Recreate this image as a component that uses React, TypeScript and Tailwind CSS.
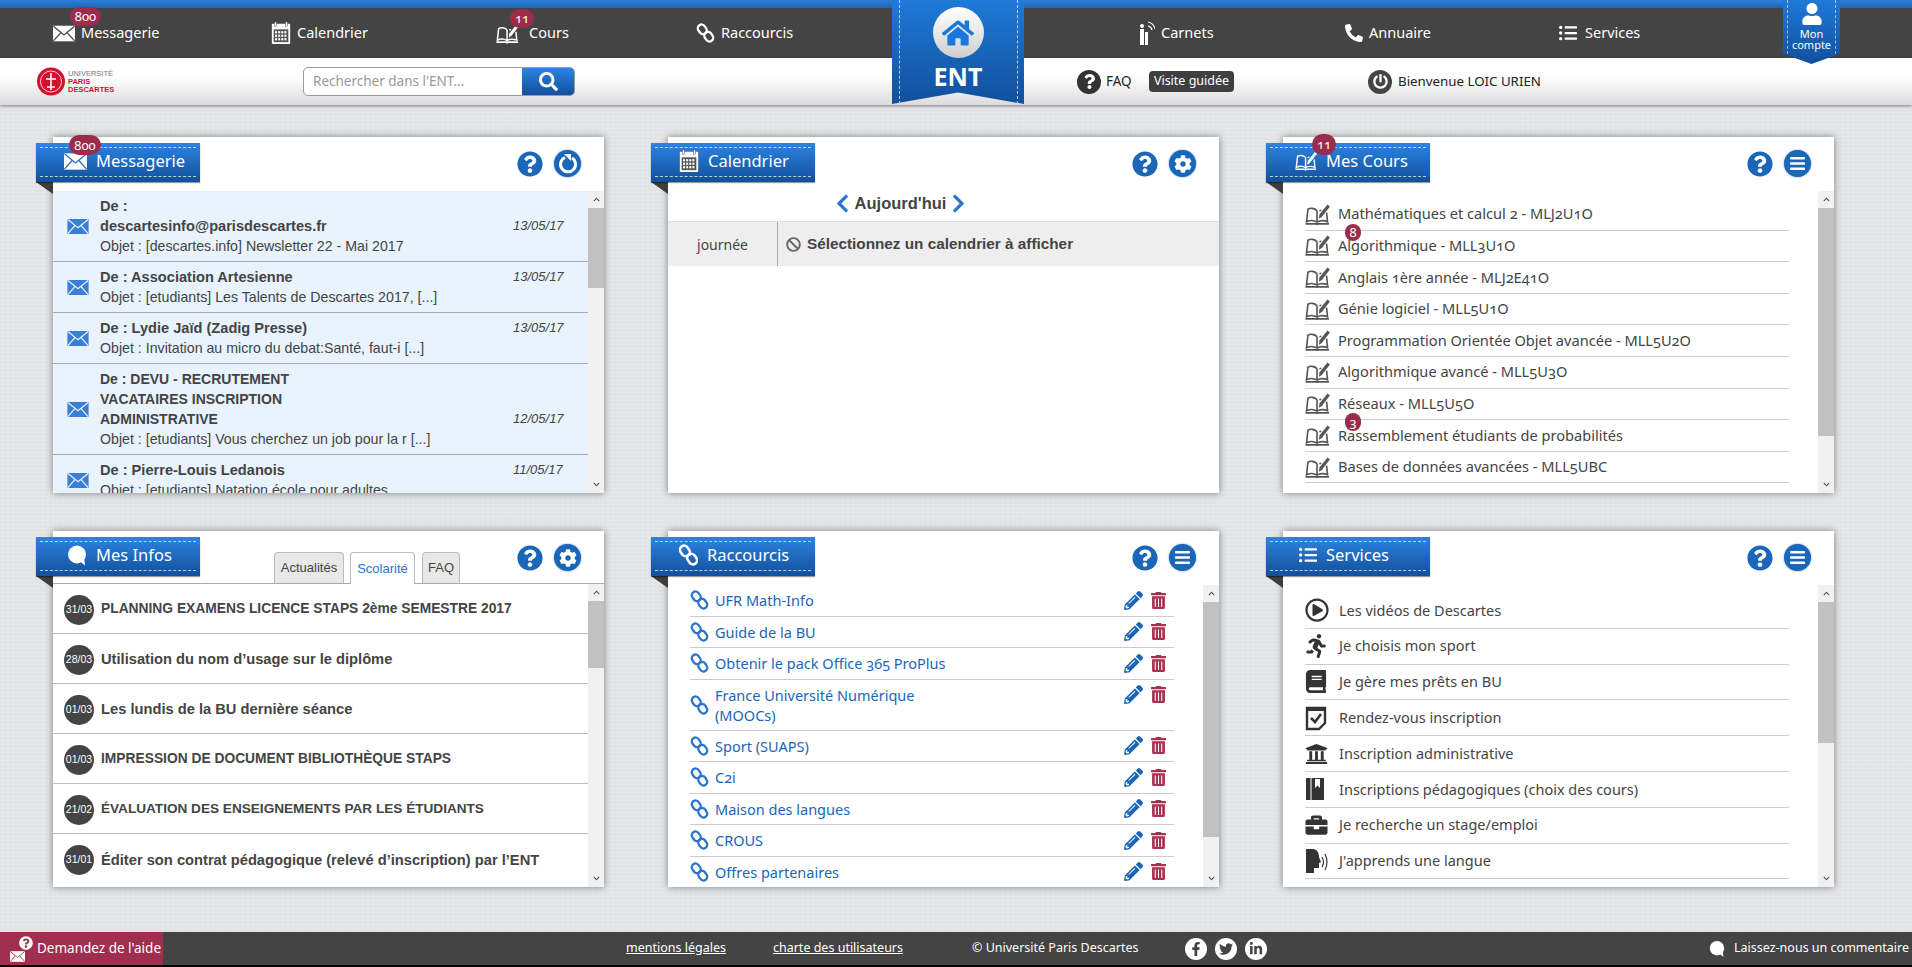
import type { ReactNode } from "react";
import {
  FaBan,
  FaBars,
  FaBook,
  FaBriefcase,
  FaChevronDown,
  FaChevronLeft,
  FaChevronRight,
  FaChevronUp,
  FaCog,
  FaFacebookF,
  FaHome,
  FaLinkedinIn,
  FaListUl,
  FaPencilAlt,
  FaPhoneAlt,
  FaPowerOff,
  FaQuestion,
  FaQuestionCircle,
  FaRegPlayCircle,
  FaRunning,
  FaSearch,
  FaTrashAlt,
  FaTwitter,
  FaUniversity,
  FaUser,
} from "react-icons/fa";

const ui = "font-['Noto_Sans','Lato',sans-serif] [font-feature-settings:'onum']";

const Envelope = ({ fill, line, className }: { fill: string; line: string; className: string }) => (
  <svg viewBox="0 0 24 17" className={className}>
    <rect x="0" y="0" width="24" height="17" fill={fill} />
    <path d="M0.5 0.5 L12 10 L23.5 0.5 M0.5 16.5 L8.5 7.5 M23.5 16.5 L15.5 7.5" fill="none" stroke={line} strokeWidth="1.4" />
  </svg>
);

const CalendarIcon = ({ className }: { className: string }) => (
  <svg viewBox="0 0 20 24" className={className}>
    <rect x="0" y="2" width="20" height="22" rx="1" fill="#fff" />
    <rect x="3" y="0" width="2" height="5" fill="#fff" stroke="#444" strokeWidth="0.5" />
    <rect x="15" y="0" width="2" height="5" fill="#fff" stroke="#444" strokeWidth="0.5" />
    <rect x="2" y="8" width="16" height="14" fill="#555" />
    {[0, 1, 2].map((r) =>
      [0, 1, 2, 3].map((c) => <rect key={`${r}-${c}`} x={3.5 + c * 3.4} y={10 + r * 3.8} width="2.2" height="2.4" fill="#fff" />)
    )}
  </svg>
);

const BookIcon = ({ color, className }: { color: string; className: string }) => (
  <svg viewBox="0 0 26 22" className={className}>
    <path
      d="M12.5 7 C10 4 5 4 3 5.5 L1.5 18.5 C5 17 9.5 17 12.5 19 C15.5 17 19.5 17 23.5 18.5 L22.5 9 M12.5 7 V19 M17 6.5 L15 7"
      fill="none"
      stroke={color}
      strokeWidth="1.7"
    />
    <path d="M0.5 20.8 H12 L12.5 21.5 L13 20.8 H25" stroke={color} strokeWidth="1.8" fill="none" />
    <path d="M14.5 15.5 L15 11 L23.5 0.5 L26 2.5 L17.5 13.5 Z" fill={color} />
  </svg>
);

const Chain = ({ color, className }: { color: string; className: string }) => (
  <svg viewBox="0 0 20 24" className={className}>
    <g fill="none" stroke={color} strokeWidth="2.8">
      <rect x="1.6" y="1.6" width="9" height="12" rx="4.5" transform="rotate(-35 6 7.6)" />
      <rect x="9.4" y="10.4" width="9" height="12" rx="4.5" transform="rotate(-35 14 16.4)" />
    </g>
  </svg>
);

const Bubble = ({ className }: { className: string }) => (
  <svg viewBox="0 0 20 20" className={className}>
    <circle cx="10" cy="9" r="9" fill="#fff" />
    <path d="M12 15 L18 20 L17 11 Z" fill="#fff" />
  </svg>
);

const CarnetIcon = () => (
  <svg viewBox="0 0 16 24" className="h-[24px] w-[16px]">
    <circle cx="3" cy="5" r="2" fill="#fff" />
    <rect x="1" y="8" width="4" height="16" fill="#fff" />
    <rect x="6" y="11" width="3" height="13" fill="#fff" />
    <path d="M9 5 A5 5 0 0 1 13 9 M9 1 A9 9 0 0 1 16 8" fill="none" stroke="#fff" strokeWidth="1.2" />
  </svg>
);

const HelpRound = ({ kind }: { kind: "refresh" | "gear" | "menu" }) => (
  <div className="flex items-center gap-[11px]">
    <FaQuestionCircle className="h-[26px] w-[26px] text-[#1a66b8]" />
    <div className="flex h-[27px] w-[27px] items-center justify-center rounded-full bg-[#1a66b8] shadow-[0_0_2px_#4a90e0]">
      {kind === "gear" && <FaCog className="h-[18px] w-[18px] text-white" />}
      {kind === "menu" && <FaBars className="h-[17px] w-[17px] text-white" />}
      {kind === "refresh" && (
        <svg viewBox="0 0 20 20" className="h-[20px] w-[20px]">
          <path d="M7 3.5 A7.5 7.5 0 1 0 14 4" fill="none" stroke="#fff" strokeWidth="3" />
          <path d="M6 0 L13 0 L13 7 Z" fill="#fff" />
        </svg>
      )}
    </div>
  </div>
);

const Badge = ({ children, className }: { children: ReactNode; className: string }) => (
  <span
    className={`absolute z-20 flex items-center justify-center rounded-full bg-[#9b2c4c] text-[13px] leading-none text-white ${ui} ${className}`}
  >
    {children}
  </span>
);

const Scrollbar = ({ thumb }: { thumb: string }) => (
  <div className="flex w-[16px] shrink-0 flex-col bg-[#f1f1f1]">
    <div className="flex h-[17px] items-center justify-center">
      <FaChevronUp className="h-[7px] w-[7px] text-[#505050]" />
    </div>
    <div className={`bg-[#c1c1c1] ${thumb}`} />
    <div className="mt-auto flex h-[17px] items-center justify-center">
      <FaChevronDown className="h-[7px] w-[7px] text-[#505050]" />
    </div>
  </div>
);

const Ribbon = ({ icon, title, badge, iconBox = "w-[60px]" }: { icon: ReactNode; title: string; badge?: ReactNode; iconBox?: string }) => (
  <>
    <div className="absolute left-[-17px] top-[6px] z-10 flex h-[39px] w-[164px] items-center bg-gradient-to-b from-[#2c84e2] to-[#134f9c] pb-[3px] shadow-[0_1px_1px_rgba(0,0,0,.4)]">
      <div className="absolute inset-x-[4px] top-[4px] border-t border-dashed border-white/70" />
      <div className="absolute inset-x-[4px] bottom-[5px] border-t border-dashed border-white/70" />
      <div className={`flex shrink-0 justify-end pr-[9px] ${iconBox}`}>{icon}</div>
      <span className={`text-[16.5px] leading-none text-white ${ui}`}>{title}</span>
      {badge}
    </div>
    <div className="absolute left-[-17px] top-[45px] h-0 w-0 border-l-[17px] border-t-[12px] border-l-transparent border-t-[#3d3d3d]" />
  </>
);

const Panel = ({ ribbon, tools, children }: { ribbon: ReactNode; tools: ReactNode; children: ReactNode }) => (
  <section className="relative flex h-[356px] w-[551px] shrink-0 flex-col bg-white shadow-[0_0_7px_rgba(0,0,0,.45)]">
    {ribbon}
    <div className="absolute right-[23px] top-[13px]">{tools}</div>
    {children}
  </section>
);

const mails = [
  { from: ["De :", "descartesinfo@parisdescartes.fr"], subject: "Objet : [descartes.info] Newsletter 22 - Mai 2017", date: "13/05/17" },
  { from: ["De : Association Artesienne"], subject: "Objet : [etudiants] Les Talents de Descartes 2017, [...]", date: "13/05/17" },
  { from: ["De : Lydie Jaïd (Zadig Presse)"], subject: "Objet : Invitation au micro du debat:Santé, faut-i [...]", date: "13/05/17" },
  { from: ["De : DEVU - RECRUTEMENT", "VACATAIRES INSCRIPTION", "ADMINISTRATIVE"], subject: "Objet : [etudiants] Vous cherchez un job pour la r [...]", date: "12/05/17" },
  { from: ["De : Pierre-Louis Ledanois"], subject: "Objet : [etudiants] Natation école pour adultes", date: "11/05/17" },
];

const courses = [
  "Mathématiques et calcul 2 - MLJ2U1O",
  "Algorithmique - MLL3U1O",
  "Anglais 1ère année - MLJ2E41O",
  "Génie logiciel - MLL5U1O",
  "Programmation Orientée Objet avancée - MLL5U2O",
  "Algorithmique avancé - MLL5U3O",
  "Réseaux - MLL5U5O",
  "Rassemblement étudiants de probabilités",
  "Bases de données avancées - MLL5UBC",
];

const infos = [
  ["31/03", "PLANNING EXAMENS LICENCE STAPS 2ème SEMESTRE 2017", "text-[13.8px]"],
  ["28/03", "Utilisation du nom d’usage sur le diplôme", "text-[14.7px]"],
  ["01/03", "Les lundis de la BU dernière séance", "text-[14.7px]"],
  ["01/03", "IMPRESSION DE DOCUMENT BIBLIOTHÈQUE STAPS", "text-[13.8px]"],
  ["21/02", "ÉVALUATION DES ENSEIGNEMENTS PAR LES ÉTUDIANTS", "text-[13.6px]"],
  ["31/01", "Éditer son contrat pédagogique (relevé d’inscription) par l’ENT", "text-[14.7px]"],
];

const shortcuts = [
  "UFR Math-Info",
  "Guide de la BU",
  "Obtenir le pack Office 365 ProPlus",
  "France Université Numérique (MOOCs)",
  "Sport (SUAPS)",
  "C2i",
  "Maison des langues",
  "CROUS",
  "Offres partenaires",
];

const ClipIcon = () => (
  <svg viewBox="0 0 22 26" className="h-[26px] w-[22px]">
    <path d="M2 3 H20 V18 L14 24 H2 Z" fill="none" stroke="#333" strokeWidth="2.4" />
    <path d="M1 2 H21 V6 H1 Z" fill="#333" />
    <path d="M6 13 L10 17 L16 9" fill="none" stroke="#333" strokeWidth="2.6" />
  </svg>
);

const NotebookIcon = () => (
  <svg viewBox="0 0 20 24" className="h-[24px] w-[20px]">
    <rect x="1" y="1" width="18" height="22" fill="#333" />
    <path d="M6 1 V23" stroke="#fff" strokeWidth="1" />
    <path d="M10 2 H15 V11 L12.5 8.5 L10 11 Z" fill="#fff" />
  </svg>
);

const SpeakIcon = () => (
  <svg viewBox="0 0 24 26" className="h-[26px] w-[24px]">
    <path d="M1 1 H8 C12 1 14 5 14 9 L16 14 L14 15 V20 H9 V25 H1 Z" fill="#333" />
    <path d="M17 9 Q20 14 17 19 M20 6 Q24 14 20 22" fill="none" stroke="#333" strokeWidth="1.2" />
  </svg>
);

const services: [ReactNode, string][] = [
  [<FaRegPlayCircle className="h-[24px] w-[24px] text-[#333]" />, "Les vidéos de Descartes"],
  [<FaRunning className="h-[24px] w-[22px] text-[#333]" />, "Je choisis mon sport"],
  [<FaBook className="h-[23px] w-[22px] text-[#333]" />, "Je gère mes prêts en BU"],
  [<ClipIcon />, "Rendez-vous inscription"],
  [<FaUniversity className="h-[24px] w-[23px] text-[#333]" />, "Inscription administrative"],
  [<NotebookIcon />, "Inscriptions pédagogiques (choix des cours)"],
  [<FaBriefcase className="h-[22px] w-[23px] text-[#333]" />, "Je recherche un stage/emploi"],
  [<SpeakIcon />, "J'apprends une langue"],
];

const NavItem = ({ icon, label, className, badge }: { icon: ReactNode; label: string; className: string; badge?: ReactNode }) => (
  <div className={`relative flex items-center gap-[6px] text-[14.5px] text-white ${ui} ${className}`}>
    {icon}
    <span>{label}</span>
    {badge}
  </div>
);

export default function App() {
  return (
    <div className="relative flex h-[967px] w-[1912px] flex-col overflow-hidden border-b-2 border-black bg-[#e3e4e6] bg-[repeating-linear-gradient(0deg,rgba(255,255,255,.14)_0px,rgba(255,255,255,.14)_1px,transparent_1px,transparent_4px),repeating-linear-gradient(90deg,rgba(0,0,0,.012)_0px,rgba(0,0,0,.012)_1px,transparent_1px,transparent_5px)] font-['Liberation_Sans',sans-serif] text-[#444]">
      <header className="relative z-30 shrink-0">
        <div className="h-[8px] bg-gradient-to-b from-[#2d7fd6] to-[#1a66b8]" />
        <nav className="flex h-[50px] items-center bg-[#444] pl-[53px]">
          <NavItem
            className="w-[218px]"
            icon={<Envelope fill="#fff" line="#444" className="h-[17px] w-[22px]" />}
            label="Messagerie"
            badge={<Badge className="left-[17px] top-[-15px] h-[19px] w-[31px]">800</Badge>}
          />
          <NavItem className="w-[225px]" icon={<CalendarIcon className="h-[22px] w-[20px]" />} label="Calendrier" />
          <NavItem
            className="w-[200px] gap-[10px]"
            icon={<BookIcon color="#fff" className="h-[21px] w-[23px]" />}
            label="Cours"
            badge={<Badge className="left-[14px] top-[-13px] h-[19px] w-[24px]">11</Badge>}
          />
          <NavItem className="w-[443px]" icon={<Chain color="#fff" className="h-[20px] w-[19px]" />} label="Raccourcis" />
          <NavItem className="w-[206px]" icon={<CarnetIcon />} label="Carnets" />
          <NavItem className="w-[214px]" icon={<FaPhoneAlt className="h-[18px] w-[18px] text-white" />} label="Annuaire" />
          <NavItem className="gap-[8px]" icon={<FaListUl className="h-[18px] w-[18px] text-white" />} label="Services" />
        </nav>
        <div className="flex h-[47px] items-center bg-gradient-to-b from-white from-40% to-[#dcdcdc] pl-[37px] shadow-[0_1px_3px_rgba(0,0,0,.45)]">
          <div className="flex w-[74px] items-center gap-[3px]">
            <svg viewBox="0 0 28 29" className="h-[29px] w-[28px] shrink-0">
              <circle cx="14" cy="14.5" r="14" fill="#d5102f" />
              <circle cx="14" cy="14.5" r="10.5" fill="none" stroke="#fff" strokeWidth="0.8" />
              <path d="M14 6 V23 M9 12 H19 M10 20 H18" stroke="#fff" strokeWidth="1.6" />
            </svg>
            <div className="text-[7.5px] leading-[8px]">
              <div className="text-[#777]">UNIVERSITÉ</div>
              <div className="font-bold text-[#d5102f]">PARIS</div>
              <div className="font-bold text-[#d5102f]">DESCARTES</div>
            </div>
          </div>
          <div className="ml-[192px] flex h-[29px] w-[272px] overflow-hidden rounded-[5px] border border-[#9a9a9a] bg-white">
            <span className={`flex-1 pl-[9px] text-[13.5px] leading-[27px] text-[#999] ${ui}`}>Rechercher dans l'ENT...</span>
            <div className="flex w-[52px] items-center justify-center bg-gradient-to-b from-[#2c84e2] to-[#134f9c]">
              <FaSearch className="h-[19px] w-[19px] text-white" />
            </div>
          </div>
          <div className="ml-[502px] flex h-[24px] w-[24px] items-center justify-center rounded-full bg-[#333]">
            <FaQuestion className="h-[15px] w-[15px] text-white" />
          </div>
          <span className={`ml-[5px] w-[27px] text-[13.5px] text-[#222] ${ui}`}>FAQ</span>
          <span className={`ml-[16px] flex h-[21px] w-[85px] items-center justify-center rounded-[4px] bg-[#3f3f3f] text-[12.5px] text-white ${ui}`}>
            Visite guidée
          </span>
          <div className="ml-[134px] flex h-[24px] w-[24px] items-center justify-center rounded-full bg-[#444]">
            <FaPowerOff className="h-[15px] w-[15px] text-white" />
          </div>
          <span className={`ml-[6px] text-[13.3px] text-[#222] ${ui}`}>Bienvenue LOIC URIEN</span>
        </div>

        <div className="absolute left-[892px] top-0 h-[104px] w-[132px] bg-gradient-to-b from-[#1f7ad8] to-[#11509c] [clip-path:polygon(0_0,100%_0,100%_100%,50%_89%,0_100%)]">
          <div className="absolute inset-y-0 left-[7px] border-l border-dashed border-white/70" />
          <div className="absolute inset-y-0 right-[6px] border-l border-dashed border-white/70" />
          <div className="mx-auto mt-[7px] flex h-[51px] w-[51px] items-center justify-center rounded-full bg-gradient-to-b from-white to-[#cfcfcf]">
            <FaHome className="h-[32px] w-[32px] text-[#1a78dc]" />
          </div>
          <div className={`mt-[4px] text-center text-[25px] font-bold leading-[28px] text-white ${ui}`}>ENT</div>
        </div>
        <div className="absolute left-[1783px] top-0 flex h-[64px] w-[57px] flex-col items-center bg-gradient-to-b from-[#1f7ad8] to-[#11509c] [clip-path:polygon(0_0,100%_0,100%_84%,50%_100%,0_84%)]">
          <div className="absolute inset-y-0 left-[4px] border-l border-dashed border-white/60" />
          <div className="absolute inset-y-0 right-[4px] border-l border-dashed border-white/60" />
          <FaUser className="mt-[3px] h-[22px] w-[22px] text-white" />
          <div className={`mt-[3px] text-center text-[11px] leading-[11px] text-white ${ui}`}>
            Mon
            <br />
            compte
          </div>
        </div>
      </header>

      <main className="flex flex-1 flex-col gap-[38px] pl-[53px] pt-[32px]">
        <div className="flex gap-[64px]">
          <Panel
            ribbon={
              <Ribbon
                icon={<Envelope fill="#fff" line="#2a6fc0" className="h-[17px] w-[23px]" />}
                title="Messagerie"
                badge={<Badge className="left-[33px] top-[-8px] h-[20px] w-[32px]">800</Badge>}
              />
            }
            tools={<HelpRound kind="refresh" />}
          >
            <div className="mt-[54px] flex min-h-0 flex-1">
              <div className="flex-1 overflow-hidden bg-[#e8f3fe]">
                {mails.map((m) => (
                  <div key={m.subject} className="flex items-center border-b border-[#aaa] py-[5px] text-[14.2px] leading-[20px]">
                    <Envelope fill="#3a7fd5" line="#e8f3fe" className="ml-[14px] h-[15px] w-[22px] shrink-0" />
                    <div className="ml-[11px] flex-1">
                      <div className="flex items-end">
                        <div className="w-[300px] font-bold">
                          {m.from.map((l) => (
                            <div key={l} className={l === l.toUpperCase() || l.includes("DEVU") ? "text-[14px]" : "text-[14.6px]"}>
                              {l}
                            </div>
                          ))}
                        </div>
                        <span className="ml-[113px] text-[13px] italic">{m.date}</span>
                      </div>
                      <div>{m.subject}</div>
                    </div>
                  </div>
                ))}
              </div>
              <Scrollbar thumb="h-[80px]" />
            </div>
          </Panel>

          <Panel
            ribbon={<Ribbon icon={<CalendarIcon className="h-[22px] w-[20px]" />} iconBox="w-[57px]" title="Calendrier" />}
            tools={<HelpRound kind="gear" />}
          >
            <div className="mt-[54px] flex h-[30px] items-center justify-center gap-[6px] pb-[6px] pr-[86px]">
              <FaChevronLeft className="h-[21px] w-[13px] text-[#2a75cf]" />
              <span className="text-[16.5px] font-bold">Aujourd'hui</span>
              <FaChevronRight className="h-[21px] w-[13px] text-[#2a75cf]" />
            </div>
            <div className="flex h-[45px] items-center border-t border-[#ddd] bg-[#eee]">
              <div className={`flex h-full w-[110px] items-center justify-center border-r border-[#aaa] text-[14px] ${ui}`}>journée</div>
              <FaBan className="ml-[8px] h-[15px] w-[15px] text-[#666]" />
              <span className="ml-[6px] text-[15.3px] font-bold">Sélectionnez un calendrier à afficher</span>
            </div>
          </Panel>

          <Panel
            ribbon={
              <Ribbon
                icon={<BookIcon color="#fff" className="h-[20px] w-[22px]" />}
                title="Mes Cours"
                badge={<Badge className="left-[46px] top-[-9px] h-[21px] w-[24px]">11</Badge>}
              />
            }
            tools={<HelpRound kind="menu" />}
          >
            <div className="mt-[54px] flex min-h-0 flex-1">
              <div className="flex-1 overflow-hidden pl-[22px] pr-[29px] pt-[8px]">
                {courses.map((c, i) => (
                  <div key={c} className={`relative flex h-[31.6px] items-center gap-[8px] border-b border-[#ccc] text-[14.6px] ${ui}`}>
                    <BookIcon color="#555" className="h-[21px] w-[25px] shrink-0" />
                    <span>{c}</span>
                    {i === 1 && <Badge className="left-[40px] top-[-7px] h-[17px] w-[16px]">8</Badge>}
                    {i === 7 && <Badge className="left-[40px] top-[-7px] h-[18px] w-[16px]">3</Badge>}
                  </div>
                ))}
              </div>
              <Scrollbar thumb="h-[228px]" />
            </div>
          </Panel>
        </div>

        <div className="flex gap-[64px]">
          <Panel ribbon={<Ribbon icon={<Bubble className="h-[21px] w-[20px]" />} title="Mes Infos" />} tools={<HelpRound kind="gear" />}>
            <div className="mt-[21px] flex h-[32px] items-end gap-[6px] border-b border-[#aaa] pl-[221px] text-[13px]">
              <div className="flex h-[31px] w-[70px] items-center justify-center rounded-t-[4px] border border-b-0 border-[#bbb] bg-[#e8e8e8]">Actualités</div>
              <div className="relative top-[1px] flex h-[32px] w-[65px] items-center justify-center rounded-t-[4px] border border-b-0 border-[#bbb] bg-white text-[#2a75cf]">Scolarité</div>
              <div className="ml-[1px] flex h-[31px] w-[38px] items-center justify-center rounded-t-[4px] border border-b-0 border-[#bbb] bg-[#e8e8e8]">FAQ</div>
            </div>
            <div className="flex min-h-0 flex-1">
              <div className="flex-1 overflow-hidden">
                {infos.map(([d, t, size], i) => (
                  <div key={t} className={`flex h-[50px] items-center pt-[2px] ${i < 5 ? "border-b border-[#bbb]" : ""}`}>
                    <span className="ml-[11px] flex h-[30px] w-[30px] shrink-0 items-center justify-center rounded-full bg-[#444] text-[10.5px] text-white">{d}</span>
                    <span className={`ml-[7px] font-bold ${size}`}>{t}</span>
                  </div>
                ))}
              </div>
              <Scrollbar thumb="h-[67px]" />
            </div>
          </Panel>

          <Panel
            ribbon={<Ribbon icon={<Chain color="#fff" className="h-[22px] w-[19px]" />} iconBox="w-[56px]" title="Raccourcis" />}
            tools={<HelpRound kind="menu" />}
          >
            <div className="mt-[54px] flex min-h-0 flex-1">
              <div className="flex-1 overflow-hidden pl-[22px] pr-[29px]">
                {shortcuts.map((s, i) => (
                  <div
                    key={s}
                    className={`flex items-center border-b border-[#ccc] text-[14.5px] text-[#1a66b8] ${ui} ${i === 3 ? "h-[51px]" : "h-[31.5px]"}`}
                  >
                    <Chain color="#2a75cf" className="h-[20px] w-[19px] shrink-0" />
                    <span className="ml-[6px] w-[260px] leading-[20px]">{s}</span>
                    <div className={`ml-auto mr-[8px] flex gap-[8px] ${i === 3 ? "self-start pt-[5px]" : ""}`}>
                      <FaPencilAlt className="h-[19px] w-[19px] text-[#1a66b8]" />
                      <FaTrashAlt className="h-[19px] w-[15px] text-[#a8324f]" />
                    </div>
                  </div>
                ))}
              </div>
              <Scrollbar thumb="h-[235px]" />
            </div>
          </Panel>

          <Panel ribbon={<Ribbon icon={<FaListUl className="h-[18px] w-[18px] text-white" />} title="Services" />} tools={<HelpRound kind="menu" />}>
            <div className="mt-[54px] flex min-h-0 flex-1">
              <div className="flex-1 overflow-hidden pl-[22px] pr-[29px] pt-[8px]">
                {services.map(([icon, s]) => (
                  <div key={s} className={`flex h-[35.8px] items-center border-b border-[#ccc] text-[14.5px] ${ui}`}>
                    <div className="flex w-[34px] shrink-0">{icon}</div>
                    <span>{s}</span>
                  </div>
                ))}
              </div>
              <Scrollbar thumb="h-[141px]" />
            </div>
          </Panel>
        </div>
      </main>

      <footer className={`flex h-[33px] shrink-0 items-center bg-[#444] text-[12.5px] text-white ${ui}`}>
        <div className="flex h-full w-[163px] items-center bg-[#9e2f4f] pl-[10px] text-[13.5px]">
          <div className="relative h-[26px] w-[27px] shrink-0">
            <Envelope fill="#fff" line="#9e2f4f" className="absolute bottom-0 left-0 h-[11px] w-[15px]" />
            <FaQuestionCircle className="absolute right-[4px] top-0 h-[14px] w-[14px] text-white" />
          </div>
          <span>Demandez de l'aide</span>
        </div>
        <span className="ml-[463px] underline">mentions légales</span>
        <span className="ml-[47px] underline">charte des utilisateurs</span>
        <span className="ml-[69px]">© Université Paris Descartes</span>
        <div className="ml-[47px] flex gap-[8px]">
          {[FaFacebookF, FaTwitter, FaLinkedinIn].map((Icon, i) => (
            <span key={i} className="flex h-[22px] w-[22px] items-center justify-center rounded-full bg-white">
              <Icon className="h-[14px] w-[14px] text-[#444]" />
            </span>
          ))}
        </div>
        <Bubble className="ml-auto h-[16px] w-[16px]" />
        <span className="ml-[9px] mr-[3px]">Laissez-nous un commentaire</span>
      </footer>
    </div>
  );
}
